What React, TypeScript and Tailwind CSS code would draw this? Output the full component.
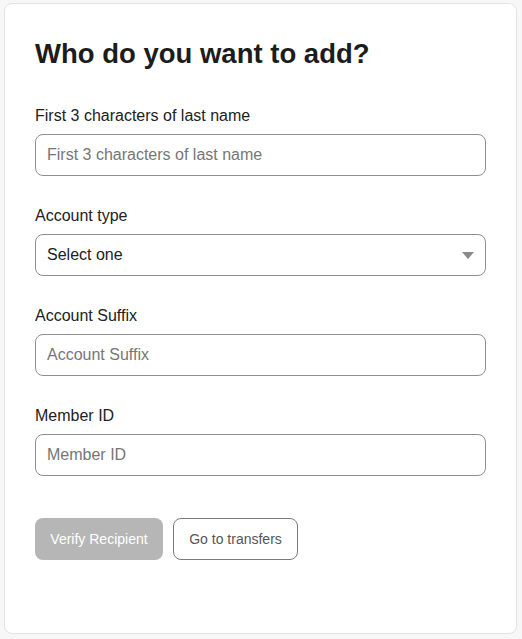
import React from "react";

const font = { fontFamily: '"Liberation Sans", Arial, sans-serif' };

function Field({ label, placeholder }: { label: string; placeholder: string }) {
  return (
    <div className="flex flex-col">
      <label className="text-[16px] leading-[20px] text-[#222] mb-[8px]">{label}</label>
      <input
        placeholder={placeholder}
        className="h-[42px] w-full rounded-[8px] border border-[#8f8f8f] bg-white px-[11px] text-[16px] text-[#222] placeholder:text-[#767676] outline-none"
        style={font}
      />
    </div>
  );
}

export default function App() {
  return (
    <div className="min-h-screen bg-[#f7f7f7] pt-[3px] pl-[4px] pr-[5px] pb-[5px]" style={font}>
      <div className="h-[631px] rounded-[8px] border border-[#e3e3e3] bg-white px-[30px] pt-[32px]">
        <h1 className="text-[27.5px] leading-[35px] font-bold text-[#1c1c1c] mb-[35px]">Who do you want to add?</h1>
        <div className="flex flex-col gap-[30px]">
          <Field label="First 3 characters of last name" placeholder="First 3 characters of last name" />
          <div className="flex flex-col">
            <label className="text-[16px] leading-[20px] text-[#222] mb-[8px]">Account type</label>
            <div className="relative h-[42px] w-full rounded-[8px] border border-[#8f8f8f] bg-white flex items-center px-[11px]">
              <span className="text-[16px] text-[#222]">Select one</span>
              <svg className="absolute right-[11px] top-[17px]" width="12" height="7" viewBox="0 0 12 7">
                <polygon points="0,0 12,0 6,7" fill="#8a8a8a" />
              </svg>
            </div>
          </div>
          <Field label="Account Suffix" placeholder="Account Suffix" />
          <Field label="Member ID" placeholder="Member ID" />
        </div>
        <div className="mt-[42px] flex gap-[10px]">
          <button className="h-[42px] w-[128px] rounded-[8px] bg-[#b6b6b6] text-[14px] text-white" style={font}>
            Verify Recipient
          </button>
          <button className="h-[42px] w-[125px] rounded-[8px] border border-[#7a7a7a] bg-white text-[14px] text-[#555]" style={font}>
            Go to transfers
          </button>
        </div>
      </div>
    </div>
  );
}
